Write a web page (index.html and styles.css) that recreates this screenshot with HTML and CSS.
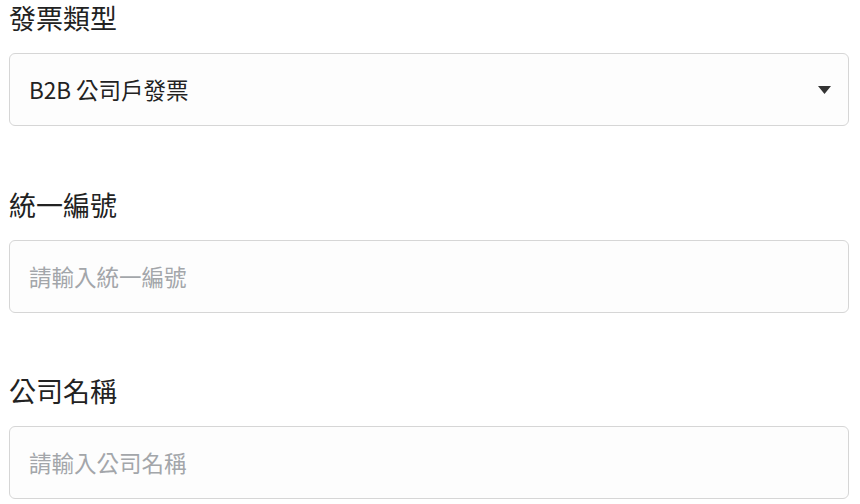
FILE: index.html
```html
<!DOCTYPE html>
<html lang="zh-Hant">
<head>
<meta charset="utf-8">
<link rel="stylesheet" href="styles.css">
</head>
<body>
<form class="form">
  <div class="field">
    <label class="label">發票類型</label>
    <div class="control select">
      <span class="value">B2B 公司戶發票</span>
      <svg class="caret" width="13" height="8" viewBox="0 0 13 8"><path d="M0 0H13L6.5 8Z" fill="#333"/></svg>
    </div>
  </div>
  <div class="field">
    <label class="label">統一編號</label>
    <div class="control">
      <span class="placeholder">請輸入統一編號</span>
    </div>
  </div>
  <div class="field">
    <label class="label">公司名稱</label>
    <div class="control">
      <span class="placeholder">請輸入公司名稱</span>
    </div>
  </div>
</form>
</body>
</html>
```
FILE: styles.css
```css
html, body {
  margin: 0;
  padding: 0;
  background: #fff;
}
body {
  font-family: "Noto Sans CJK TC", "Noto Sans", sans-serif;
  color: #222;
}
.form {
  display: flex;
  flex-direction: column;
  gap: 60.5px;
  padding: 0 11px 0 9px;
}
.field {
  display: flex;
  flex-direction: column;
}
.label {
  font-size: 27px;
  line-height: 36px;
  margin-bottom: 17px;
  color: #222;
}
.control {
  height: 73px;
  box-sizing: border-box;
  border: 1px solid #d6d6d6;
  border-radius: 6px;
  background: #fdfdfd;
  display: flex;
  align-items: center;
  padding: 0 19px;
  font-size: 22.5px;
  line-height: 1;
}
.select {
  justify-content: space-between;
}
.value {
  color: #222;
}
.placeholder {
  color: #a3a6aa;
}
.caret {
  margin-right: -2px;
}
```
